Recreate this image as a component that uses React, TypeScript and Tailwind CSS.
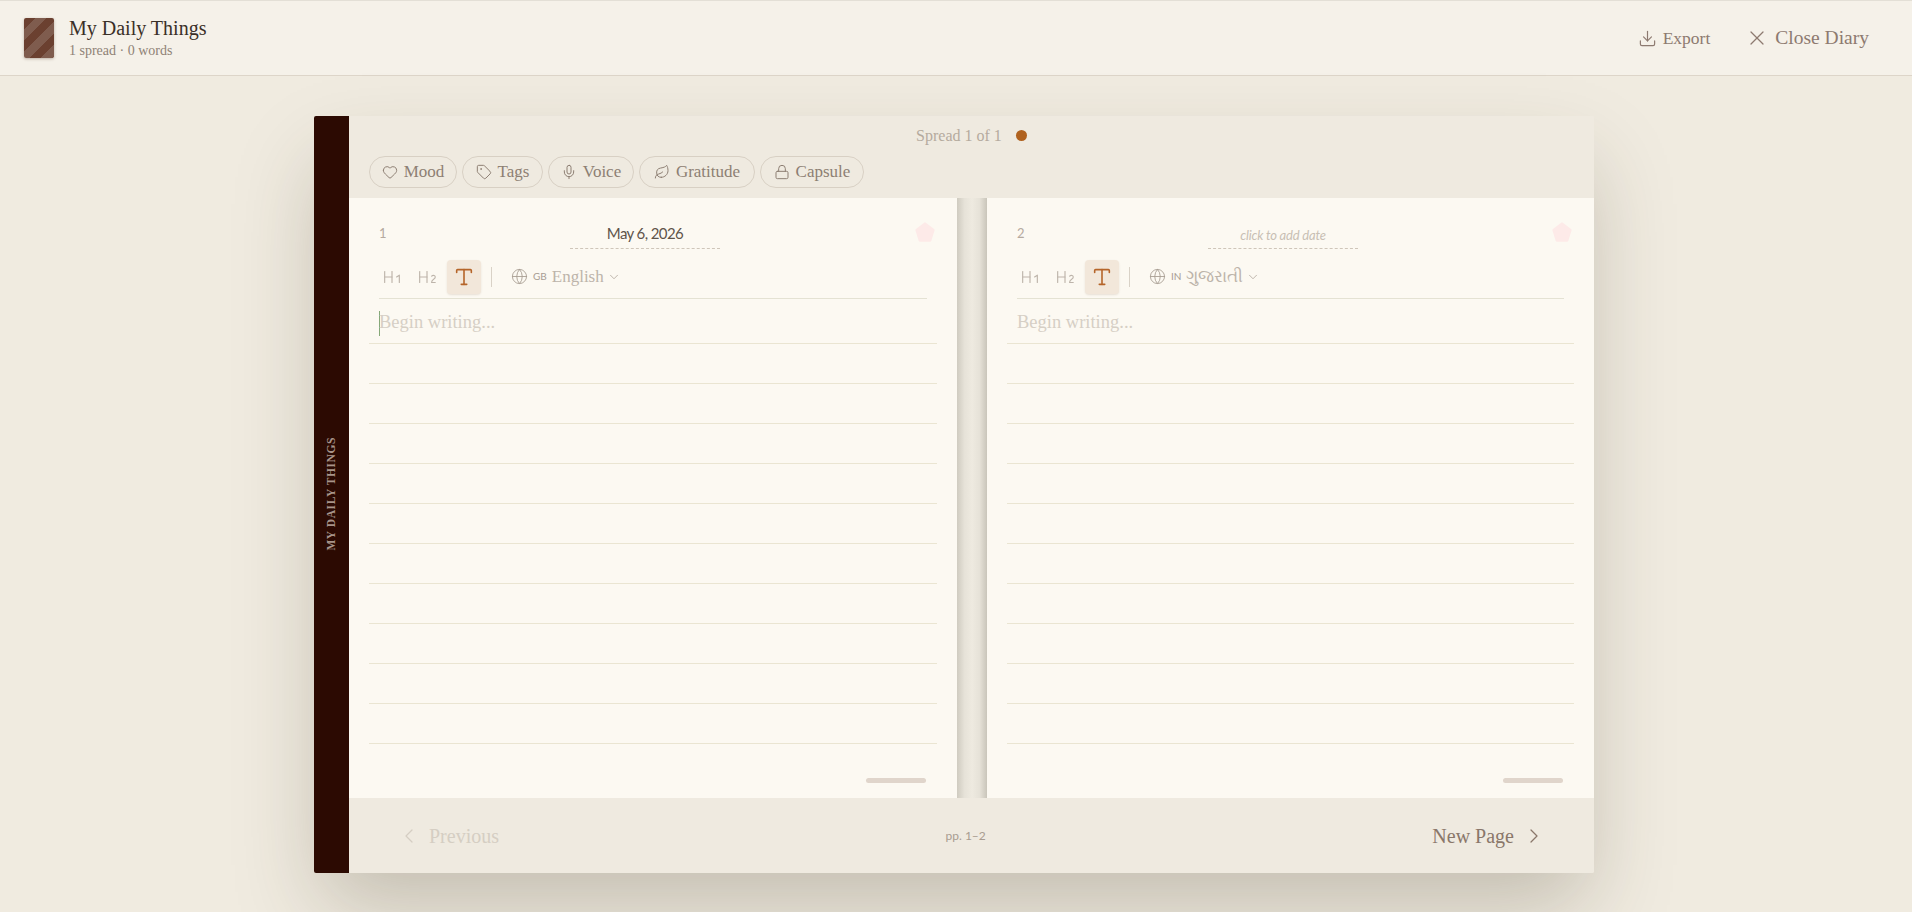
import { ChevronDown, ChevronLeft, ChevronRight, Download, Globe, Heading1, Heading2, Heart, Leaf, Lock, Mic, Tag, Type, X } from 'lucide-react';

const CHIPS = [
  { label: 'Mood', icon: Heart, width: 'w-[88px]' },
  { label: 'Tags', icon: Tag, width: 'w-[81px]' },
  { label: 'Voice', icon: Mic, width: 'w-[86px]' },
  { label: 'Gratitude', icon: Leaf, width: 'w-[116px]' },
  { label: 'Capsule', icon: Lock, width: 'w-[104px]' },
];

const LINES = Array.from({ length: 10 });

function Page({
  num,
  date,
  flag,
  lang,
  caret,
  width,
}: {
  num: number;
  date?: string;
  flag: string;
  lang: string;
  caret?: boolean;
  width: string;
}) {
  return (
    <div className={`relative h-full ${width} shrink-0 bg-[#fcf9f2] px-5`}>
      {/* sticker */}
      <svg className="absolute right-[21px] top-[23px] h-[22px] w-[22px]" viewBox="0 0 24 24" fill="#fdeae8" stroke="#fdeae8" strokeWidth="3" strokeLinejoin="round">
        <path d="M12 3l9 7-3.500 11h-11L3 10z" />
      </svg>

      <div className="px-[10px]">
        <div className="flex h-[62px] items-start pt-[27px]">
          <span className="w-[8px] font-['Lato',sans-serif] text-[13px] leading-[16px] text-[#b5aaa0]">{num}</span>
          <div className="ml-[183px] flex h-[24px] w-[150px] justify-center border-b border-dashed border-[#cfc6ba]">
            {date ? (
              <span className="font-['Lato',sans-serif] text-[15px] leading-[17px] tracking-[-0.6px] text-[#5f544a]">{date}</span>
            ) : (
              <span className="font-['Lato',sans-serif] text-[13px] italic leading-[20px] tracking-[-0.2px] text-[#c8bfb4]">click to add date</span>
            )}
          </div>
        </div>

        {/* toolbar */}
        <div className="flex h-[39px] items-start border-b border-[#e4e2d3] text-[#bdb4aa]">
          <div className="flex h-[34px] w-[68px] items-center gap-[14px] pl-[2px]">
            <Heading1 size={22} strokeWidth={1.25} className="shrink-0" />
            <Heading2 size={22} strokeWidth={1.25} className="-ml-[1px] shrink-0" />
          </div>
          <div className="flex h-[34px] w-[34px] items-center justify-center rounded-[4px] bg-[#f2e7da] text-[#b5652a] shadow-[0_1px_2px_rgba(120,90,60,0.15)]">
            <Type size={22} strokeWidth={1.75} />
          </div>
          <div className="ml-[10px] mt-[7px] h-[20px] w-px bg-[#d9d2c7]" />
          <div className="ml-[19px] flex h-[34px] items-center gap-[5px]">
            <Globe size={17} strokeWidth={1.25} className="text-[#a89d92]" />
            <span className="font-['Lato',sans-serif] text-[10px] uppercase text-[#a89d92]">{flag}</span>
            <span className="font-['Liberation_Serif','Noto_Sans',serif] text-[17px] text-[#bdb4aa]">{lang}</span>
            <ChevronDown size={14} strokeWidth={1.25} className="-ml-[2px] text-[#a89d92]" />
          </div>
        </div>
      </div>

      {/* ruled lines */}
      <div className="flex h-[45px] items-center border-b border-[#eae5d2] pl-[10px] pt-[5px]">
        {caret && <span className="mr-[-1px] h-[25px] w-px bg-[#86a878]" />}
        <span className="font-['Liberation_Serif',serif] text-[18.500px] text-[#d6cfc5]">Begin writing...</span>
      </div>
      {LINES.map((_, i) => (
        <div key={i} className="h-[40px] border-b border-[#eae5d2]" />
      ))}

      <div className="absolute bottom-[15px] right-[31px] h-[5px] w-[60px] rounded-full bg-[#e0d5cb]" />
    </div>
  );
}

export default function App() {
  return (
    <div className="flex h-[912px] flex-col overflow-hidden bg-[#f0ebe0] font-['Liberation_Serif',serif]">
      <header className="flex h-[76px] shrink-0 items-center justify-between border-y border-t-[#e3dfd6] border-b-[#ddd5c9] bg-[#f5f1e9] pl-[24px] pr-[43px]">
        <div className="flex items-center gap-[15px]">
          <div className="h-[40px] w-[30px] rounded-[2px] bg-[repeating-linear-gradient(135deg,#6b4030_0px,#6b4030_8px,#7f5c4e_8px,#7f5c4e_16px)] shadow-[0_1px_3px_rgba(60,30,10,0.3)]" />
          <div>
            <div className="text-[20px] font-normal leading-[24px] text-[#3a2f27]">My Daily Things</div>
            <div className="mt-[2px] text-[14px] leading-[18px] text-[#8f8276]">1 spread · 0 words</div>
          </div>
        </div>
        <div className="flex items-center text-[#8d7a70]">
          <Download size={19} strokeWidth={1.5} />
          <span className="ml-[6px] text-[17.500px]">Export</span>
          <X size={24} strokeWidth={1.25} className="ml-[35px]" />
          <span className="ml-[6px] text-[19.500px]">Close Diary</span>
        </div>
      </header>

      <main className="flex flex-1 items-center justify-center pr-[4px]">
        <div className="flex h-[757px] w-[1280px] overflow-hidden rounded-[2px] shadow-[0_40px_80px_-8px_rgba(60,50,30,0.25)]">
          <aside className="flex w-[35px] shrink-0 items-center justify-center bg-[#2c0a02]">
            <span className="rotate-180 text-[11.500px] font-bold uppercase tracking-[0.6px] text-[#a8948a] [writing-mode:vertical-rl]">My Daily Things</span>
          </aside>

          <div className="flex min-w-0 flex-1 flex-col">
            <div className="h-[82px] shrink-0 bg-[#efeae0] px-5">
              <div className="flex h-[40px] items-center justify-center text-[16px] text-[#b5aa9e]">
                <span>Spread 1 of 1</span>
                <span className="ml-[14px] h-[11px] w-[11px] rounded-full bg-[#b0621f]" />
              </div>
              <div className="flex gap-[5px]">
                {CHIPS.map((c) => (
                  <button
                    key={c.label}
                    className={`flex h-[32px] ${c.width} items-center justify-center gap-[6px] rounded-full border border-[#d8d0c4] text-[17px] text-[#8d7f73]`}
                  >
                    <c.icon size={16} strokeWidth={1.5} />
                    {c.label}
                  </button>
                ))}
              </div>
            </div>

            <div className="flex h-[600px] shrink-0">
              <Page num={1} date="May 6, 2026" flag="GB" lang="English" caret width="w-[608px]" />
              <div className="h-full w-[30px] shrink-0 bg-[linear-gradient(90deg,#cfcbc0_0%,#e6e2d8_25%,#eeeae0_50%,#e6e2d8_75%,#c9c5ba_100%)]" />
              <Page num={2} flag="IN" lang="ગુજરાતી" width="w-[607px]" />
            </div>

            <footer className="flex flex-1 items-center justify-between bg-[#efeae0] pl-[48px] pr-[48px] pt-[2px]">
              <div className="flex items-center gap-[8px] text-[#d5cec3]">
                <ChevronLeft size={24} strokeWidth={1.25} />
                <span className="text-[20px]">Previous</span>
              </div>
              <span className="font-['Lato',sans-serif] text-[12px] text-[#a89c90]">pp. 1–2</span>
              <div className="flex items-center gap-[8px] text-[#8a776a]">
                <span className="text-[20px]">New Page</span>
                <ChevronRight size={24} strokeWidth={1.25} />
              </div>
            </footer>
          </div>
        </div>
      </main>
    </div>
  );
}
